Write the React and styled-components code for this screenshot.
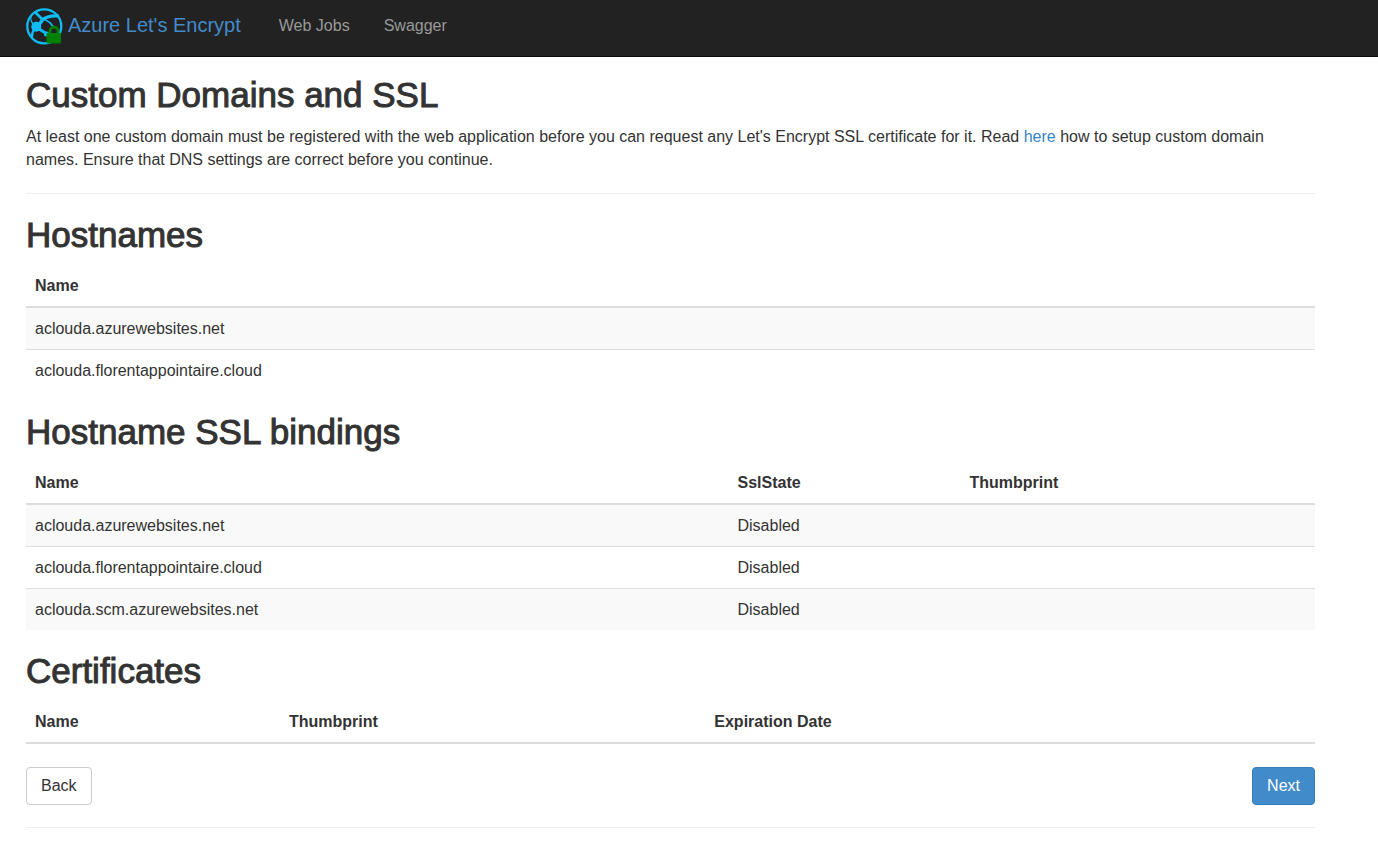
import React from 'react'
import styled, { createGlobalStyle } from 'styled-components'

const GlobalStyle = createGlobalStyle`
  * {
    box-sizing: border-box;
  }
  body {
    margin: 0;
    background-color: #fff;
    color: #333;
    font-family: 'Helvetica Neue', Helvetica, 'Liberation Sans', Arial, sans-serif;
    font-size: 16px;
    line-height: 23px;
  }
`

const Navbar = styled.nav`
  display: flex;
  align-items: center;
  min-height: 57px;
  padding: 0 26px 4px;
  background-color: #222;
  border-bottom: 1px solid #090909;
`

const Brand = styled.a`
  display: flex;
  align-items: center;
  gap: 5px;
  margin-right: 21px;
  color: #428bca;
  font-size: 20px;
  line-height: 20px;
  text-decoration: none;
  & span {
    padding-bottom: 2px;
  }
`

const NavLink = styled.a`
  padding: 0 17px 2px;
  color: #999;
  text-decoration: none;
`

const Container = styled.main`
  margin: 0 63px 0 26px;
  padding: 19px 0;
`

const Title = styled.h2`
  margin: ${props => (props.$first ? '0' : '22px')} 0 12px;
  font-size: 35px;
  font-weight: 500;
  line-height: 37px;
  -webkit-text-stroke: 1px #333;
`

const Text = styled.p`
  margin: 0;
  & a {
    color: #3683cc;
    text-decoration: none;
  }
`

const Divider = styled.hr`
  margin: 22px 0;
  border: 0;
  border-top: 1px solid #eee;
`

const StyledTable = styled.table`
  width: 100%;
  table-layout: fixed;
  border-spacing: 0;
  & th,
  td {
    padding: 9px;
    text-align: left;
  }
  & th {
    border-bottom: 2px solid #ddd;
  }
  & tbody tr + tr td {
    border-top: 1px solid #ddd;
  }
  & tbody tr:nth-child(odd) {
    background-color: #f9f9f9;
  }
`

const Column = styled.th`
  width: ${props => props.$width || 'auto'};
`

const Actions = styled.div`
  display: flex;
  justify-content: space-between;
  margin-top: 23px;
`

const Button = styled.button`
  padding: 7px 14px;
  border: 1px solid ${props => (props.$primary ? '#357ebd' : '#ccc')};
  border-radius: 4px;
  background-color: ${props => (props.$primary ? '#428bca' : '#fff')};
  color: ${props => (props.$primary ? '#fff' : '#333')};
  cursor: pointer;
  font: inherit;
  line-height: 22px;
`

const Logo = () => (
  <svg width="37" height="37" viewBox="0 0 37 37" aria-hidden="true">
    <circle cx="18.3" cy="18.3" r="17" fill="none" stroke="#0fbcf5" strokeWidth="2.3" />
    <g fill="none" stroke="#0fbcf5">
      <path d="M9 4l8 8" strokeWidth="2.6" />
      <path d="M16 12q6-5 17-4" strokeWidth="3.2" />
      <path d="M17 11l-6 9" strokeWidth="3.4" />
      <path d="M17 11q7 2 11 9" strokeWidth="1.8" />
      <path d="M10 19l11 7" strokeWidth="2.8" />
      <path d="M9 20q-3 4-3 9" strokeWidth="2.4" />
      <path d="M5 8q-1 6 4 10" strokeWidth="1.2" />
    </g>
    <circle cx="10.3" cy="18.8" r="5" fill="#0fbcf5" />
    <circle cx="20.5" cy="26" r="2.6" fill="#0fbcf5" />
    <path d="M24 26v-3a4 4 0 0 1 8 0v3" fill="none" stroke="#008000" strokeWidth="2.8" />
    <rect x="20.5" y="25" width="14.5" height="10.5" rx="1" fill="#008000" />
  </svg>
)

const Table = ({ columns, rows = [] }) => (
  <StyledTable>
    <thead>
      <tr>
        {columns.map(column => (
          <Column key={column.name} scope="col" $width={column.width}>
            {column.name}
          </Column>
        ))}
      </tr>
    </thead>
    <tbody>
      {rows.map(row => (
        <tr key={row[0]}>
          {columns.map((column, i) => (
            <td key={column.name}>{row[i]}</td>
          ))}
        </tr>
      ))}
    </tbody>
  </StyledTable>
)

const App = () => (
  <>
    <GlobalStyle />
    <Navbar>
      <Brand href="#">
        <Logo />
        <span>Azure Let's Encrypt</span>
      </Brand>
      <NavLink href="#jobs">Web Jobs</NavLink>
      <NavLink href="#swagger">Swagger</NavLink>
    </Navbar>
    <Container>
      <Title $first>Custom Domains and SSL</Title>
      <Text>
        At least one custom domain must be registered with the web application before you can
        request any Let's Encrypt SSL certificate for it. Read <a href="#domains">here</a> how to
        setup custom domain names. Ensure that DNS settings are correct before you continue.
      </Text>
      <Divider />
      <Title>Hostnames</Title>
      <Table
        columns={[{ name: 'Name' }]}
        rows={[['aclouda.azurewebsites.net'], ['aclouda.florentappointaire.cloud']]}
      />
      <Title>Hostname SSL bindings</Title>
      <Table
        columns={[
          { name: 'Name', width: '54.5%' },
          { name: 'SslState', width: '18%' },
          { name: 'Thumbprint' }
        ]}
        rows={[
          ['aclouda.azurewebsites.net', 'Disabled'],
          ['aclouda.florentappointaire.cloud', 'Disabled'],
          ['aclouda.scm.azurewebsites.net', 'Disabled']
        ]}
      />
      <Title>Certificates</Title>
      <Table
        columns={[
          { name: 'Name', width: '19.7%' },
          { name: 'Thumbprint', width: '33%' },
          { name: 'Expiration Date' }
        ]}
      />
      <Actions>
        <Button type="button">Back</Button>
        <Button type="button" $primary>
          Next
        </Button>
      </Actions>
      <Divider />
    </Container>
  </>
)

export default App
